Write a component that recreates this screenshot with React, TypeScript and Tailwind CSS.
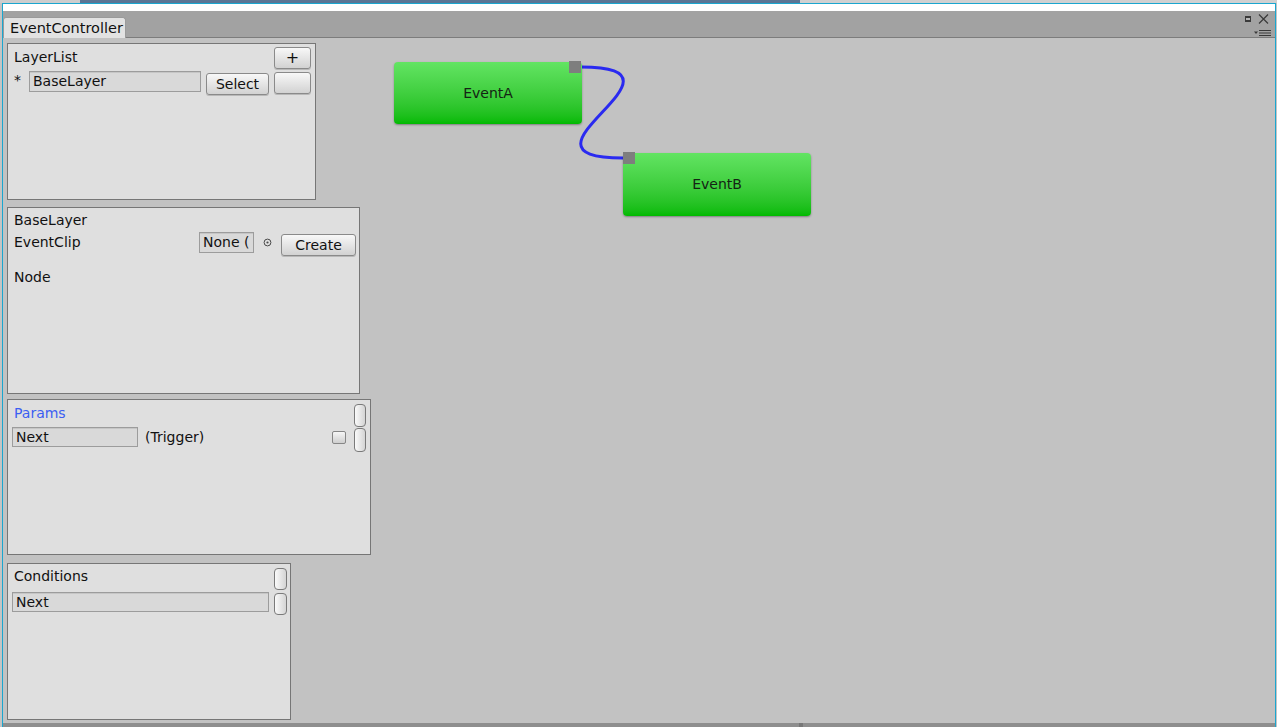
import React from "react";

function Btn({ className = "", children }: { className?: string; children?: React.ReactNode }) {
  return (
    <div
      className={`flex items-center justify-center shrink-0 border border-[#8a8a8a] rounded-[3px] bg-gradient-to-b from-[#f8f8f8] to-[#d2d2d2] shadow-[0_1px_0_#b8b8b8] text-[14px] leading-none text-[#111] ${className}`}
    >
      {children}
    </div>
  );
}

function Field({ className = "", children }: { className?: string; children?: React.ReactNode }) {
  return (
    <div
      className={`shrink-0 border border-[#9c9c9c] bg-[#d9d9d9] shadow-[inset_0_1px_0_#c6c6c6] pl-[3px] leading-[19px] overflow-hidden whitespace-nowrap text-[#111] ${className}`}
    >
      {children}
    </div>
  );
}

function Pill({ className = "" }: { className?: string }) {
  return (
    <div
      className={`shrink-0 border border-[#7a7a7a] rounded-[4px] bg-gradient-to-r from-[#fafafa] to-[#d4d4d4] ${className}`}
    />
  );
}

function Panel({ className = "", children }: { className?: string; children?: React.ReactNode }) {
  return (
    <div className={`shrink-0 border border-[#767676] bg-[#dfdfdf] flex flex-col ${className}`}>{children}</div>
  );
}

function Node({ label, className = "" }: { label: string; className?: string }) {
  return (
    <div
      className={`absolute w-[188px] flex items-center justify-center rounded-[4px] bg-gradient-to-b from-[#62e462] to-[#00ba00] shadow-[0_1px_2px_rgba(0,0,0,0.35)] text-[14px] text-[#142414] ${className}`}
    >
      {label}
    </div>
  );
}

export default function App() {
  return (
    <div className="w-[1277px] h-[727px] overflow-hidden flex flex-col bg-[#c6c6c6] font-['DejaVu_Sans',sans-serif] text-[14px] text-[#111]">
      <div className="h-[3px] flex shrink-0">
        <div className="w-[80px] bg-[#cdcdcd]" />
        <div className="w-[720px] bg-[#5b7594]" />
        <div className="flex-1 bg-[#d0d0d0]" />
      </div>
      <div className="flex flex-1 min-h-0">
        <div className="w-[2px] bg-[#c4c4c4] shrink-0" />
        <div className="flex-1 min-w-0 flex flex-col border-l border-t border-r border-[#1aa6cf]">
          <div className="h-[7px] bg-white shrink-0" />
          {/* Tab bar */}
          <div className="h-[27px] shrink-0 flex items-end bg-[#a2a2a2] border-b border-[#7c7c7c]">
            <div className="relative mb-[-1px] w-[123px] h-[21px] border border-b-0 border-[#9a9a9a] rounded-t-[3px] bg-[#e2e2e2] pl-[6px] pt-[2px] leading-[17px] overflow-hidden whitespace-nowrap text-[14.5px] text-[#111]">
              EventController
            </div>
            <svg className="ml-auto self-start shrink-0" width="32" height="26" viewBox="0 0 32 26">
              <rect x="2" y="5" width="6" height="6" fill="#3a3a3a" />
              <rect x="3" y="7" width="4" height="2" fill="#b5b5b5" />
              <path d="M16 3.5 L25 12.5 M25 3.5 L16 12.5" stroke="#3a3a3a" strokeWidth="1.2" fill="none" />
              <path d="M11 20.5 L15 20.5 L13 23 Z" fill="#3a3a3a" />
              <path d="M16 19.5 H28 M16 22 H28 M16 24.5 H28" stroke="#3a3a3a" strokeWidth="1" fill="none" />
            </svg>
          </div>
          {/* Main */}
          <div className="relative h-[685px] shrink-0 bg-[#c2c2c2] flex">
            <div className="flex flex-col pl-[4px] pt-[5px]">
              {/* LayerList */}
              <Panel className="w-[309px] h-[157px]">
                <div className="flex items-start pt-[3px]">
                  <span className="ml-[6px] mt-[2px] leading-[17px]">LayerList</span>
                  <Btn className="ml-auto mr-[4px] w-[37px] h-[22px] text-[16px]">+</Btn>
                </div>
                <div className="flex items-start mt-[2px]">
                  <span className="ml-[6px] w-[15px] mt-[1px] leading-[17px]">*</span>
                  <Field className="w-[172px] h-[21px]">BaseLayer</Field>
                  <Btn className="ml-[5px] mt-[2px] w-[63px] h-[22px]">Select</Btn>
                  <Btn className="ml-[5px] mt-[1px] w-[37px] h-[22px]" />
                </div>
              </Panel>
              {/* BaseLayer */}
              <Panel className="mt-[7px] w-[353px] h-[187px]">
                <span className="ml-[6px] mt-[4px] leading-[17px]">BaseLayer</span>
                <div className="flex items-start mt-[3px]">
                  <span className="ml-[6px] w-[185px] mt-[2px] leading-[17px]">EventClip</span>
                  <Field className="w-[55px] h-[21px] bg-[#d3d3d3] border-[#8c8c8c]">None (</Field>
                  <div className="w-[27px] h-[21px] flex items-center justify-center">
                    <svg width="9" height="9" viewBox="0 0 9 9">
                      <circle cx="4.5" cy="4.5" r="3.4" stroke="#4a4a4a" strokeWidth="1" fill="none" />
                      <circle cx="4.5" cy="4.5" r="1.1" fill="#4a4a4a" />
                    </svg>
                  </div>
                  <Btn className="mt-[2px] w-[75px] h-[22px]">Create</Btn>
                </div>
                <span className="ml-[6px] mt-[13px] leading-[17px]">Node</span>
              </Panel>
              {/* Params */}
              <Panel className="mt-[5px] w-[364px] h-[156px]">
                <div className="flex items-start pt-[4px]">
                  <span className="ml-[6px] mt-[1px] leading-[17px] text-[#3b5ef2]">Params</span>
                  <Pill className="ml-auto mr-[4px] w-[12px] h-[23px]" />
                </div>
                <div className="flex items-start">
                  <Field className="ml-[4px] w-[126px] h-[20px] leading-[18px]">Next</Field>
                  <span className="ml-[7px] mt-[2px] leading-[17px]">(Trigger)</span>
                  <div className="ml-auto mt-[4px] w-[14px] h-[13px] border border-[#868686] rounded-[2px] bg-gradient-to-b from-[#f6f6f6] to-[#cfcfcf]" />
                  <Pill className="ml-[8px] mr-[4px] mt-[1px] w-[12px] h-[24px]" />
                </div>
              </Panel>
              {/* Conditions */}
              <Panel className="mt-[8px] w-[284px] h-[157px]">
                <div className="flex items-start pt-[4px]">
                  <span className="ml-[6px] mt-[0px] leading-[17px]">Conditions</span>
                  <Pill className="ml-auto mr-[3px] w-[13px] h-[22px]" />
                </div>
                <div className="flex items-start">
                  <Field className="ml-[4px] mt-[2px] w-[257px] h-[20px] leading-[18px]">Next</Field>
                  <Pill className="ml-auto mr-[3px] mt-[3px] w-[13px] h-[22px]" />
                </div>
              </Panel>
            </div>

            {/* Node canvas */}
            <svg className="absolute left-0 top-0 pointer-events-none" width="1272" height="685">
              <path
                d="M578 29 C705 29, 493 120, 620 120"
                stroke="#2a2af0"
                strokeWidth="3"
                fill="none"
                strokeLinecap="round"
              />
            </svg>
            <Node label="EventA" className="left-[391px] top-[24px] h-[62px]" />
            <Node label="EventB" className="left-[620px] top-[115px] h-[63px]" />
            <div className="absolute left-[566px] top-[23px] w-[12px] h-[12px] bg-[#7e7e7e]" />
            <div className="absolute left-[620px] top-[114px] w-[12px] h-[12px] bg-[#7e7e7e]" />
          </div>
          <div className="flex-1 bg-[#8e8e8e] flex">
            <div className="ml-[796px] w-[4px] bg-[#777]" />
          </div>
        </div>
        <div className="w-[1px] bg-[#c4c4c4] shrink-0" />
      </div>
    </div>
  );
}
